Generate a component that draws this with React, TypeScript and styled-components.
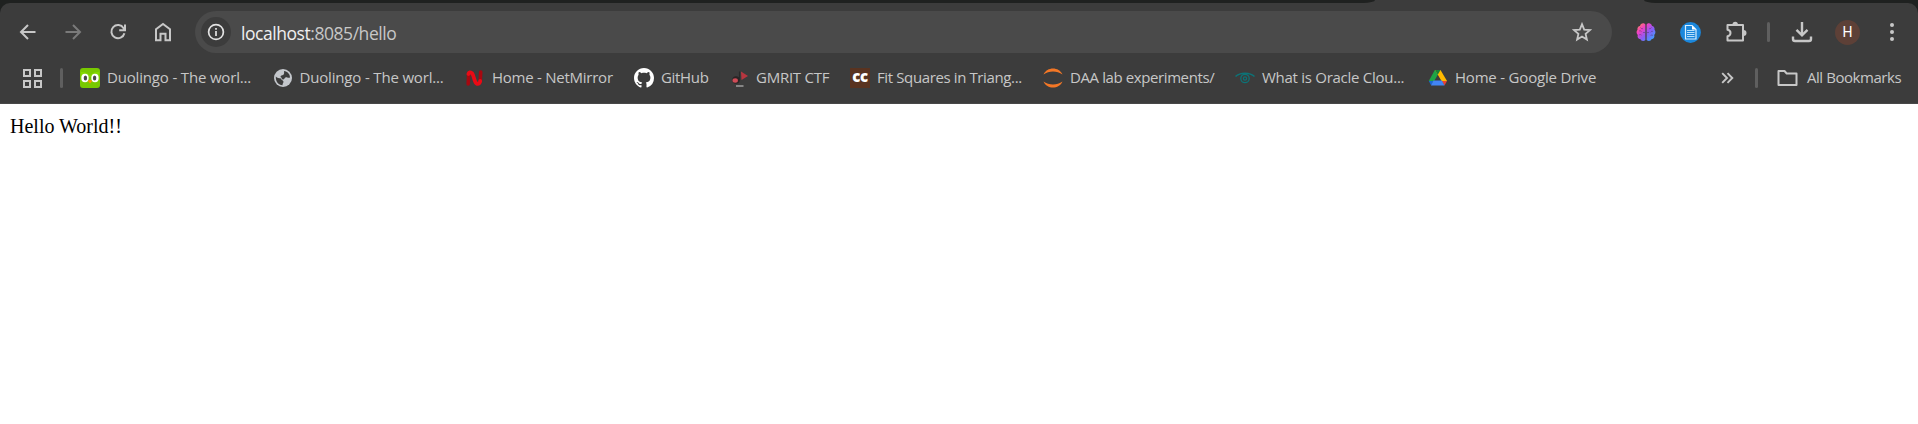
import React from "react";
import styled, { createGlobalStyle } from "styled-components";

const Global = createGlobalStyle`
  * { box-sizing: border-box; }
  body { margin: 0; background: #fff; }
  svg { display: block; flex: none; }
`;

const Window = styled.div`
  display: flex;
  flex-direction: column;
  height: 424px;
  overflow: hidden;
  background: #fff;
`;

const TabStrip = styled.div`
  height: 3px;
  background: #3c3c3c;
  display: flex;
  justify-content: space-between;
`;

const StripGap = styled.div<{ $w: number; $side: "left" | "right" }>`
  width: ${(p) => p.$w}px;
  height: 3px;
  background: #1f2120;
  border-radius: ${(p) => (p.$side === "left" ? "0 0 12px 0 / 0 0 3px 0" : "0 0 0 12px / 0 0 0 3px")};
`;

const Chrome = styled.div`
  background: #1f2120;
`;

const Frame = styled.div`
  height: 101px;
  background: #3c3c3c;
  border-radius: 10px 10px 0 0;
  border-bottom: 1px solid #484848;
`;

const Toolbar = styled.div`
  display: flex;
  align-items: center;
  height: 58px;
  padding-left: 5px;
`;

const ToolButton = styled.button<{ $w?: number; $color?: string }>`
  display: flex;
  align-items: center;
  justify-content: center;
  flex: none;
  width: ${(p) => p.$w ?? 45}px;
  height: 42px;
  padding: 0;
  border: 0;
  background: none;
  color: ${(p) => p.$color ?? "#c7c7c7"};
`;

const AddressBar = styled.div`
  display: flex;
  align-items: center;
  flex: none;
  width: 1417px;
  height: 42px;
  margin: 0 11px 0 10px;
  padding: 0 6px;
  border-radius: 21px;
  background: #4a4a4a;
`;

const SiteInfo = styled.span`
  display: flex;
  align-items: center;
  justify-content: center;
  width: 30px;
  height: 30px;
  border-radius: 50%;
  background: #3c3c3c;
  color: #e3e3e3;
`;

const Url = styled.span`
  flex: 1;
  margin-left: 10px;
  padding-top: 1px;
  font: 17.5px/24px "Open Sans", sans-serif;
  letter-spacing: -0.45px;
  color: #c7c7c7;
  white-space: nowrap;
`;

const Host = styled.span`
  color: #f0f0f0;
`;

const Divider = styled.span`
  flex: none;
  width: 3px;
  height: 20px;
  border-radius: 2px;
  background: #5f5f5f;
`;

const Avatar = styled.span`
  display: flex;
  align-items: center;
  justify-content: center;
  width: 25px;
  height: 25px;
  border-radius: 50%;
  background: #5d4037;
  color: #fff;
  font: 14px/25px Roboto, sans-serif;
`;

const BookmarksBar = styled.div`
  display: flex;
  align-items: center;
  height: 34px;
  padding: 0 16px 0 22px;
  color: #c7c7c7;
`;

const BookmarkList = styled.div`
  display: flex;
  flex: 1;
  margin-left: 17px;
`;

const Bookmark = styled.a<{ $w: number }>`
  display: flex;
  align-items: center;
  gap: 7px;
  width: ${(p) => p.$w}px;
`;

const Label = styled.span<{ $track: number }>`
  padding-bottom: 2px;
  font: 15px/20px "Open Sans", sans-serif;
  letter-spacing: ${(p) => p.$track}px;
  white-space: nowrap;
`;

const AppsSlot = styled.span`
  display: flex;
  width: 38px;
`;

const AllBookmarks = styled.a`
  display: flex;
  align-items: center;
  width: 125px;
  margin-left: 19px;
  gap: 9px;
`;

const Overflow = styled.span`
  display: flex;
  margin-right: 21px;
`;

const CodeChefTile = styled.span`
  flex: none;
  width: 20px;
  height: 20px;
  background: #593320;
  color: #fff;
  text-align: center;
  font: 800 15px/17px "Open Sans", sans-serif;
  letter-spacing: -0.4px;
`;

const Page = styled.main`
  padding: 11px 10px;
  font: 20px/23px "Liberation Serif", serif;
  color: #000;
`;

const BackArrow = ({ flip = false }: { flip?: boolean }) => (
  <svg width="20" height="20" viewBox="0 0 20 20" fill="none" stroke="currentColor" strokeWidth="2" transform={flip ? "scale(-1 1)" : undefined}>
    <path d="M17.5 10H3.5M10 3L3 10l7 7" />
  </svg>
);

const Reload = () => (
  <svg width="20" height="20" viewBox="0 0 20 20" fill="none" stroke="currentColor" strokeWidth="2">
    <path d="M16.4 11.2A6.6 6.6 0 1 1 15.6 6.2L16.6 7.8M17 2.5v5.8h-5.8" />
  </svg>
);

const HomeIcon = () => (
  <svg width="20" height="22" viewBox="0 0 20 22" fill="none" stroke="currentColor" strokeWidth="2">
    <path d="M3 19.300V8.300L10 3l7 5.300V19.300h-4.500v-6.500H7.500V19.300z" />
  </svg>
);

const Info = () => (
  <svg width="18" height="18" viewBox="0 0 18 18" fill="none" stroke="currentColor">
    <circle cx="9" cy="9" r="7.4" strokeWidth="1.7" />
    <path d="M9 8v5M9 5v1.800" strokeWidth="1.700" />
  </svg>
);

const Star = () => (
  <svg width="20" height="20" viewBox="0 0 20 20" fill="none" stroke="currentColor" strokeWidth="1.800">
    <path d="M10 2.200l2.200 5.400 5.800.5-4.400 3.800 1.300 5.700L10 14.600l-4.900 3 1.300-5.700L2 8.100l5.800-.5z" />
  </svg>
);

const Brain = () => (
  <svg width="20" height="20" viewBox="0 0 20 20">
    <defs>
      <linearGradient id="brain" x1="0" y1="0" x2="1" y2="1">
        <stop offset="0" stopColor="#ff9a3c" />
        <stop offset=".3" stopColor="#f23fc4" />
        <stop offset=".58" stopColor="#8b5cf6" />
        <stop offset="1" stopColor="#22b8ff" />
      </linearGradient>
    </defs>
    <path fill="url(#brain)" d="M9.400 2.500v15.500C8 19.500 5 19.300 4.300 17 1.800 17 1.200 14.600 1.800 13 .2 11.500.2 9 1.500 7.700 1 5.700 2.300 4 4 3.900 4.500 1 8 .3 9.400 2.500zM10.600 2.500v15.500c1.500 1.500 4.400 1.300 5.100-1 2.500 0 3.100-2.400 2.500-4 1.600-1.500 1.600-4 .3-5.300.5-2-.8-3.700-2.500-3.800C15.500 1 12 .3 10.600 2.500z" />
    <path fill="none" stroke="#5b3a80" strokeWidth=".6" d="M4.500 5.500c.5 1 1.500 1.500 2.500 1M3 9c1-.5 2-.1 2.500.5M3 13c1-.6 2-.6 2.500.2M9 10.500H7M15.500 5.500c-.5 1-1.500 1.500-2.500 1M17 9.500c-1.200-.5-2 0-2.300.8M17 13.500c-1-.6-2-.6-2.500.2M11 10.500h2" />
  </svg>
);

const DocBadge = () => (
  <svg width="21" height="21" viewBox="0 0 21 21">
    <circle cx="10.500" cy="10.500" r="10.400" fill="#1b87dc" />
    <path d="M5.500 3.500h6.500l4 4V17h-10.500z" fill="#1b87dc" stroke="#d9efff" strokeWidth="1.200" />
    <path d="M12 3.500v4h4z" fill="#fff" />
    <path d="M7 8.500h7.500M7 10.500h7.500M7 12.500h7.500M7 14.500h7.500" stroke="#b9e0fb" strokeWidth="1.200" />
  </svg>
);

const Puzzle = () => (
  <svg width="22" height="22" viewBox="0 0 22 22">
    <path fill="none" stroke="currentColor" strokeWidth="2" strokeLinejoin="round" d="M2.500 4H18V19.500H2.500V15.200C6.500 14.500 6.500 9.500 2.500 8.800z" />
    <path fill="currentColor" d="M7.500 3.500a2.700 2.700 0 0 1 5.400 0zM18.500 9a3 3 0 0 1 0 6z" />
  </svg>
);

const Download = () => (
  <svg width="22" height="22" viewBox="0 0 22 22" fill="none" stroke="currentColor" strokeWidth="2.400">
    <path d="M11 1v13M5.500 8.800L11 14.300l5.500-5.500M2 15.500V18q0 2 2 2h14q2 0 2-2v-2.500" />
  </svg>
);

const Menu = () => (
  <svg width="6" height="20" viewBox="0 0 6 20" fill="currentColor">
    <circle cx="3" cy="3" r="2" /><circle cx="3" cy="10" r="2" /><circle cx="3" cy="17" r="2" />
  </svg>
);

const Apps = () => (
  <svg width="20" height="20" viewBox="0 0 20 20" fill="none" stroke="currentColor" strokeWidth="2">
    <path d="M2 2h6v6H2zM13 2h6v6h-6zM2 13h6v6H2zM13 13h6v6h-6z" />
  </svg>
);

const Duo = () => (
  <svg width="20" height="20" viewBox="0 0 20 20">
    <rect width="20" height="20" rx="3" fill="#78c800" />
    <path d="M1 4c3 0 6 .5 9 3 3-2.500 6-3 9-3v5H1z" fill="#84d800" />
    <ellipse cx="5" cy="10" rx="3.700" ry="4.300" fill="#fff" />
    <ellipse cx="15" cy="10" rx="3.700" ry="4.300" fill="#fff" />
    <ellipse cx="5.400" cy="10" rx="1.700" ry="2.500" fill="#4b4b4b" />
    <ellipse cx="14.600" cy="10" rx="1.700" ry="2.500" fill="#4b4b4b" />
    <path d="M7.800 13q2.200-2 4.400 0L10 15.500z" fill="#ff9600" />
  </svg>
);

const Globe = () => (
  <svg width="20" height="20" viewBox="0 0 20 20">
    <circle cx="10" cy="10" r="9" fill="#c4c7cc" />
    <path fill="#3c3c3c" d="M11 3c3.500.5 6 3 6 6.500-2 .8-3-.5-4-.3-1.800.2-1.200 2.300-3 2.300-1.500 0-1-2-2.500-2.500 0-1.500 1.700-1.700 2.500-2 1.200-.5 1.300-2.500 1-4zM2.800 8.500c1.500 1.500 3.200 1.700 5.200 2 .5 2 2.500 1.800 2.500 3.200 0 1.300-1 1.500-1 3.500-4-.2-7-3.700-6.700-8.700z" />
  </svg>
);

const NetMirror = () => (
  <svg width="20" height="20" viewBox="0 0 20 20" fill="none" strokeLinecap="round">
    <path d="M3.200 16L3.700 6M15.200 13.500L15.700 4" stroke="#a60810" strokeWidth="3.600" />
    <path d="M3.400 6Q4.200 3.200 7 5.200C9.500 8.500 9 14.500 12 15.800Q14.800 16.300 15.200 13" stroke="#ea0a15" strokeWidth="3.800" />
  </svg>
);

const GitHub = () => (
  <svg width="20" height="20" viewBox="0 0 16 16" fill="#fff">
    <path d="M8 0C3.580 0 0 3.580 0 8c0 3.540 2.290 6.530 5.470 7.590.4.070.55-.17.55-.38 0-.19-.01-.82-.01-1.490-2.010.37-2.530-.49-2.690-.94-.09-.23-.48-.94-.82-1.130-.28-.15-.68-.52-.01-.53.63-.01 1.080.58 1.230.82.72 1.210 1.870.87 2.330.66.070-.52.28-.87.51-1.070-1.780-.2-3.640-.89-3.640-3.950 0-.87.31-1.590.82-2.150-.08-.2-.36-1.020.08-2.120 0 0 .67-.21 2.200.82.64-.18 1.320-.27 2-.27s1.360.09 2 .27c1.530-1.040 2.200-.82 2.200-.82.44 1.100.16 1.920.08 2.120.51.56.82 1.270.82 2.150 0 3.070-1.870 3.750-3.650 3.950.29.25.54.73.54 1.480 0 1.070-.01 1.930-.01 2.200 0 .21.15.46.55.38A8.010 8.010 0 0 0 16 8c0-4.420-3.580-8-8-8z" />
  </svg>
);

const Flag = () => (
  <svg width="20" height="20" viewBox="0 0 20 20">
    <circle cx="7" cy="12" r="3.800" fill="#2b2425" />
    <path d="M10.500 3.500v9" stroke="#292929" strokeWidth="1.200" />
    <path d="M12 3.500l7 4.500-6.500 4z" fill="#b8363f" />
    <ellipse cx="6.200" cy="12.500" rx="2.700" ry="2.200" fill="#cf4c57" />
    <path d="M7 18h7.500" stroke="#999" strokeWidth="1.600" />
  </svg>
);

const Jupyter = () => (
  <svg width="20" height="20" viewBox="0 0 20 20" fill="#f37726">
    <path d="M.5 6.500C4-1.500 16-1.500 19.500 6.500 14 2.500 6 2.500.5 6.500zM.5 13.500c3.500 8 15.500 8 19 0-5.500 4-13.500 4-19 0z" />
  </svg>
);

const Eye = () => (
  <svg width="20" height="20" viewBox="0 0 20 20" fill="none" stroke="#0d7377">
    <path d="M.5 8.500C5 4 15 4 19.500 8.500" strokeWidth="1.500" />
    <circle cx="10" cy="10.500" r="4.200" strokeWidth="1.300" />
    <circle cx="10" cy="10.500" r="1.600" strokeWidth="1.200" />
  </svg>
);

const Drive = () => (
  <svg width="20" height="20" viewBox="0 0 20 20">
    <path d="M6.800 2h5.700L6.200 13H.8z" fill="#1ea446" />
    <path d="M7 2h5.500l6.500 11h-5.500z" fill="#ffba00" />
    <path d="M7 2h5.500L9.700 6.700z" fill="#188038" />
    <path d="M13.500 13H19l-2.500 4.500z" fill="#ea4335" />
    <path d="M.8 13h4.700L3.200 17.500z" fill="#1967d2" />
    <path d="M5.500 12.500h8.300l2.700 5H3z" fill="#4285f4" />
  </svg>
);

const Folder = () => (
  <svg width="21" height="18" viewBox="0 0 21 18" fill="none" stroke="currentColor" strokeWidth="2" strokeLinejoin="round">
    <path d="M1.500 2h6l2.200 2.500h9.800V16h-18z" />
  </svg>
);

const Chevrons = () => (
  <svg width="13" height="12" viewBox="0 0 13 12" fill="none" stroke="currentColor" strokeWidth="1.900">
    <path d="M1.200 1.200L6 6l-4.800 4.800M6.500 1.200L11.300 6l-4.800 4.800" />
  </svg>
);

const bookmarks = [
  { icon: <Duo />, text: "Duolingo - The worl...", w: 192.5, track: -0.17 },
  { icon: <Globe />, text: "Duolingo - The worl...", w: 192.5, track: -0.17 },
  { icon: <NetMirror />, text: "Home - NetMirror", w: 169, track: -0.25 },
  { icon: <GitHub />, text: "GitHub", w: 95, track: -0.33 },
  { icon: <Flag />, text: "GMRIT CTF", w: 121, track: -0.25 },
  { icon: <CodeChefTile>cc</CodeChefTile>, text: "Fit Squares in Triang...", w: 193, track: -0.38 },
  { icon: <Jupyter />, text: "DAA lab experiments/", w: 192, track: -0.4 },
  { icon: <Eye />, text: "What is Oracle Clou...", w: 193, track: -0.27 },
  { icon: <Drive />, text: "Home - Google Drive", w: 180, track: -0.2 },
];

export default function App() {
  return (
    <Window>
      <Global />
      <TabStrip>
        <StripGap $w={1375} $side="left" />
        <StripGap $w={274} $side="right" />
      </TabStrip>
      <Chrome>
        <Frame>
          <Toolbar>
            <ToolButton><BackArrow /></ToolButton>
            <ToolButton $color="#7a7a7a"><BackArrow flip /></ToolButton>
            <ToolButton><Reload /></ToolButton>
            <ToolButton><HomeIcon /></ToolButton>
            <AddressBar>
              <SiteInfo><Info /></SiteInfo>
              <Url><Host>localhost</Host>:8085/hello</Url>
              <ToolButton $w={48}><Star /></ToolButton>
            </AddressBar>
            <ToolButton><Brain /></ToolButton>
            <ToolButton><DocBadge /></ToolButton>
            <ToolButton $w={46}><Puzzle /></ToolButton>
            <ToolButton $w={19}><Divider /></ToolButton>
            <ToolButton $w={48}><Download /></ToolButton>
            <ToolButton $w={43}><Avatar>H</Avatar></ToolButton>
            <ToolButton $w={46}><Menu /></ToolButton>
          </Toolbar>
          <BookmarksBar>
            <AppsSlot><Apps /></AppsSlot>
            <Divider />
            <BookmarkList>
              {bookmarks.map((b, i) => (
                <Bookmark key={i} $w={b.w}>
                  {b.icon}
                  <Label $track={b.track}>{b.text}</Label>
                </Bookmark>
              ))}
            </BookmarkList>
            <Overflow><Chevrons /></Overflow>
            <Divider />
            <AllBookmarks>
              <Folder />
              <Label $track={-0.45}>All Bookmarks</Label>
            </AllBookmarks>
          </BookmarksBar>
        </Frame>
      </Chrome>
      <Page>Hello World!!</Page>
    </Window>
  );
}
